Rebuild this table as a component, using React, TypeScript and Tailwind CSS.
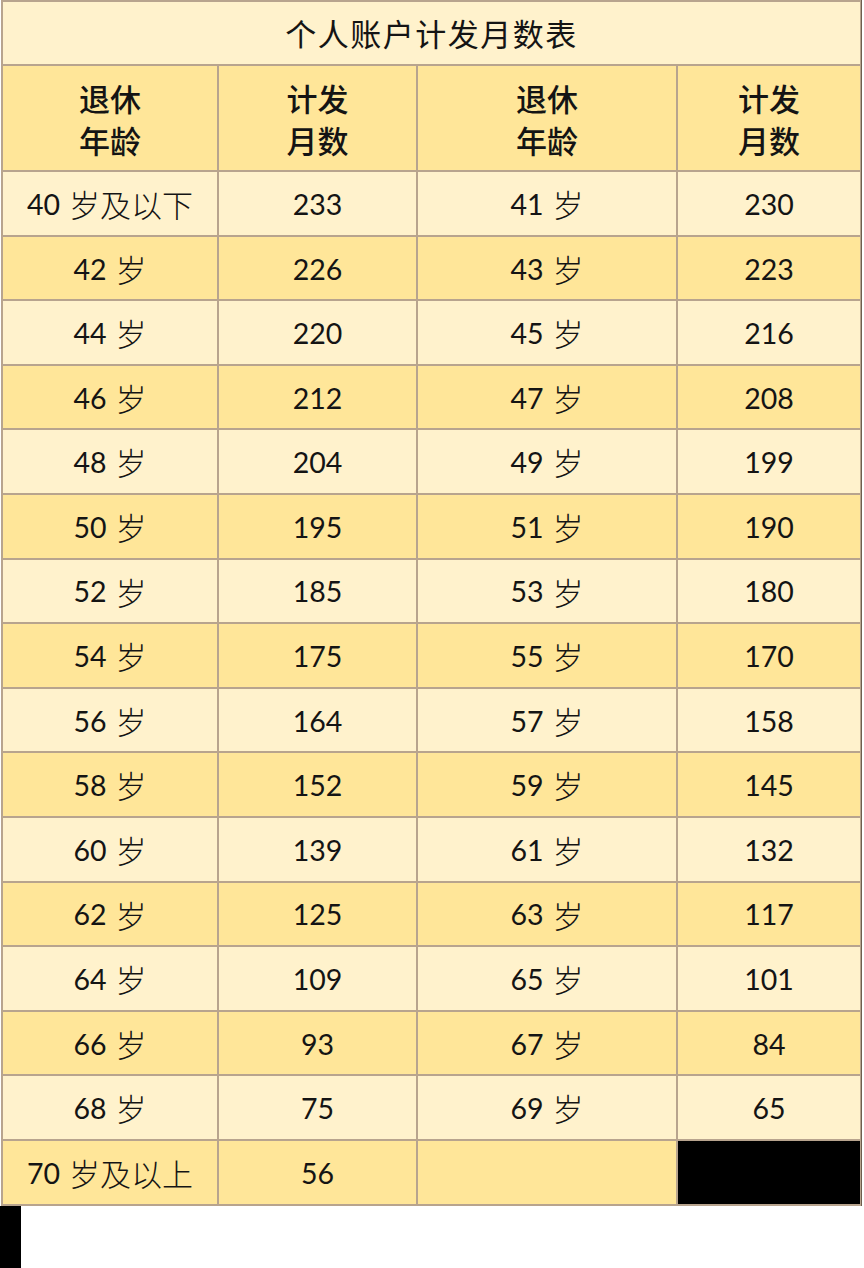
import React from "react";

const rows: [string, string, string, string][] = [
  ["40 岁及以下", "233", "41 岁", "230"],
  ["42 岁", "226", "43 岁", "223"],
  ["44 岁", "220", "45 岁", "216"],
  ["46 岁", "212", "47 岁", "208"],
  ["48 岁", "204", "49 岁", "199"],
  ["50 岁", "195", "51 岁", "190"],
  ["52 岁", "185", "53 岁", "180"],
  ["54 岁", "175", "55 岁", "170"],
  ["56 岁", "164", "57 岁", "158"],
  ["58 岁", "152", "59 岁", "145"],
  ["60 岁", "139", "61 岁", "132"],
  ["62 岁", "125", "63 岁", "117"],
  ["64 岁", "109", "65 岁", "101"],
  ["66 岁", "93", "67 岁", "84"],
  ["68 岁", "75", "69 岁", "65"],
  ["70 岁及以上", "56", "", ""],
];

const font = { fontFamily: '"Lato", "Noto Sans CJK SC", sans-serif' };

function Label({ text }: { text: string }) {
  const i = text.indexOf(" ");
  if (i < 0) return <span>{text}</span>;
  return (
    <span className="flex items-center">
      <span className="text-[28.5px]">{text.slice(0, i)}</span>
      <span className="w-[9px]"></span>
      <span className="text-[31px] font-light" style={{ fontFamily: '"Noto Sans CJK SC", sans-serif' }}>
        {text.slice(i + 1)}
      </span>
    </span>
  );
}

export default function App() {
  return (
    <div className="w-[864px] h-[1268px] bg-white overflow-hidden text-[#141414]" style={font}>
      <div className="ml-[1px] w-[861px] bg-[#b8a48e] p-[2px] border-r-[1px] border-r-[#6e5e4e]">
        <div className="grid grid-cols-[214px_197px_258px_182px] gap-[2px]">
          <div
            className="col-span-4 h-[62px] bg-[#fff2cc] flex items-center justify-center text-[31px] tracking-[1.5px]"
            style={{ fontFamily: '"Noto Sans CJK SC", sans-serif' }}
          >
            个人账户计发月数表
          </div>
          {["退休|年龄", "计发|月数", "退休|年龄", "计发|月数"].map((h, i) => (
            <div
              key={i}
              className="h-[104px] bg-[#ffe699] flex flex-col items-center justify-center text-[31px] leading-[42px] font-medium pt-[2px]"
              style={{ fontFamily: '"Noto Sans CJK SC", sans-serif' }}
            >
              {h.split("|").map((t) => (
                <span key={t}>{t}</span>
              ))}
            </div>
          ))}
          {rows.map((r, ri) =>
            r.map((c, ci) => {
              const isLast = ri === rows.length - 1;
              const bg = isLast && ci === 3 ? "bg-black" : ri % 2 === 0 ? "bg-[#fff2cc]" : "bg-[#ffe699]";
              return (
                <div
                  key={`${ri}-${ci}`}
                  className={`h-[62.6px] flex items-center justify-center text-[28.5px] pt-[2px] ${bg}`}
                >
                  {ci % 2 === 0 ? <Label text={c} /> : c}
                </div>
              );
            })
          )}
        </div>
      </div>
      <div className="w-[21px] h-[64px] bg-black"></div>
    </div>
  );
}
